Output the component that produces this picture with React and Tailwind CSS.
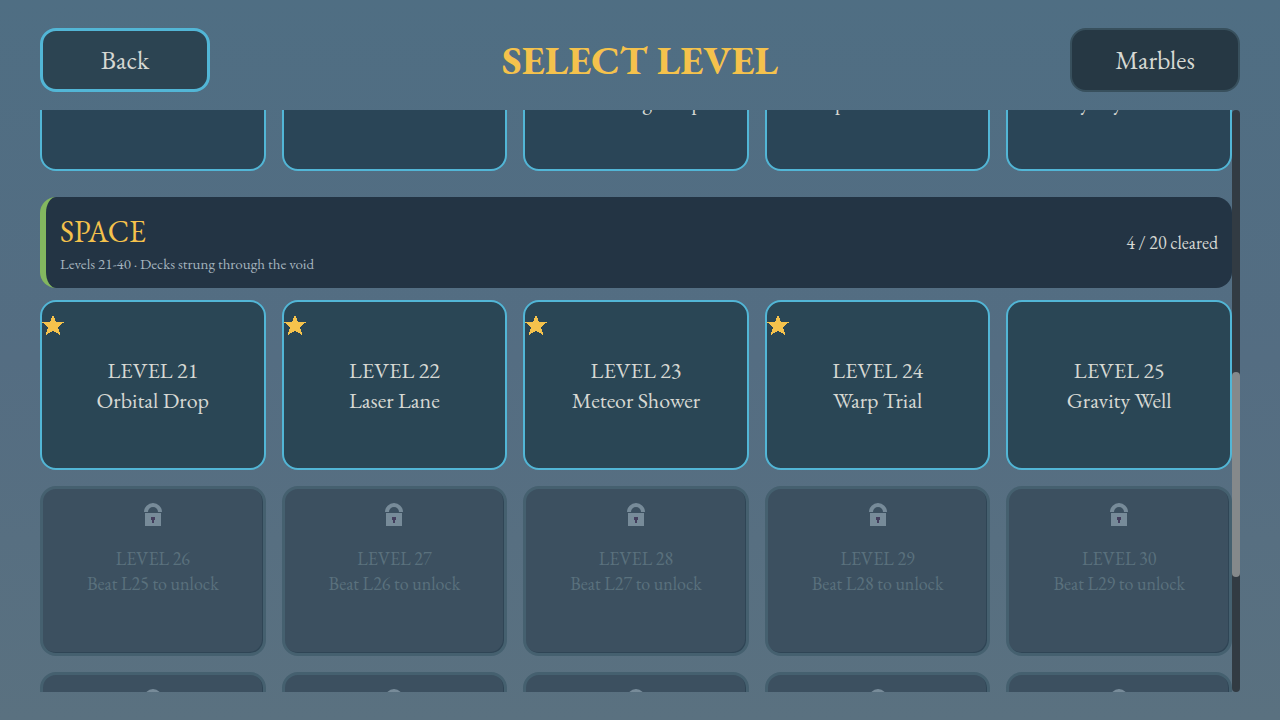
import React from "react";

const clearedRow = [
  { n: 16 },
  { n: 17 },
  { n: 18, name: "Shrinking Loop" },
  { n: 19, name: "Spiral Tower" },
  { n: 20, name: "Skyway Finale" },
];

const openRow = [
  { n: 21, name: "Orbital Drop", star: true },
  { n: 22, name: "Laser Lane", star: true },
  { n: 23, name: "Meteor Shower", star: true },
  { n: 24, name: "Warp Trial", star: true },
  { n: 25, name: "Gravity Well" },
];

const lockedLevels = [26, 27, 28, 29, 30, 31, 32, 33, 34, 35];

const scroll = { start: 45, size: 35.2 };

function Star() {
  return (
    <svg
      viewBox="0 0 22 20"
      shapeRendering="crispEdges"
      className="absolute left-0 top-[13px] h-5 w-[22px]"
      aria-hidden="true"
    >
      <path
        fill="#f5c24c"
        d="M11 -0.6 L13.8 6.6 L22.4 6.8 L16 12 L18.4 20.2 L11 15.8 L3.6 20.2 L6 12 L-0.4 6.8 L8.2 6.6 Z"
      />
    </svg>
  );
}

function Lock() {
  return (
    <svg
      viewBox="0 0 18 24"
      className="absolute left-1/2 top-3.5 h-6 w-[18px] -translate-x-1/2"
      aria-hidden="true"
    >
      <path fill="#778b99" d="M0 9 A9 9 0 0 1 18 9 L14 9 A5 5 0 0 0 4 9 Z" />
      <rect x="1" y="10" width="16" height="13" fill="#778b99" />
      <path fill="#443f5e" d="M7 14 H11 V17 H10 V20 H8 V17 H7 Z" />
    </svg>
  );
}

function LevelCard({ n, name, star, tint = "bg-[#2a4655]" }) {
  return (
    <button
      type="button"
      className={`relative flex h-[170px] flex-col items-center justify-center rounded-2xl border-2 border-[#52b6d6] pt-0.5 text-[22px] leading-[30px] text-[#d6d8d3] ${tint}`}
    >
      {star && <Star />}
      <span>LEVEL {n}</span>
      {name && <span>{name}</span>}
    </button>
  );
}

function LockedCard({ n }) {
  return (
    <button
      type="button"
      disabled
      className="relative flex h-[170px] flex-col items-center justify-center rounded-2xl border-[3px] border-[#45606f] bg-[#3c5060] text-lg leading-[25px] text-[#5a717d] shadow-[inset_-1px_-1px_0_#2f4555]"
    >
      <Lock />
      <span>LEVEL {n}</span>
      <span>Beat L{n - 1} to unlock</span>
    </button>
  );
}

export default function App() {
  return (
    <div className="flex h-screen flex-col gap-[18px] bg-linear-to-b from-[#4f6e83] via-[#546d82] to-[#5a7180] px-10 py-7 font-['EB_Garamond','Liberation_Serif',serif]">
      <header className="flex h-16 shrink-0 items-center justify-between">
        <button
          type="button"
          className="h-16 w-[170px] rounded-2xl border-[3px] border-[#52b6d6] bg-[#2c4452] text-[26px] text-[#d6d8d3]"
        >
          Back
        </button>
        <h1 className="text-[40px] font-bold text-[#f5c24c]">SELECT LEVEL</h1>
        <button
          type="button"
          className="h-16 w-[170px] rounded-2xl border-2 border-[#38505d] bg-[#263844] text-[26px] text-[#d6d8d3]"
        >
          Marbles
        </button>
      </header>

      <div className="flex min-h-0 flex-1">
        <main className="min-w-0 flex-1 overflow-hidden">
          <div className="-mt-[109px] grid grid-cols-5 gap-4">
            {clearedRow.map((level) => (
              <LevelCard key={level.n} {...level} tint="bg-[#2a4557]" />
            ))}
          </div>

          <section className="mb-3 mt-[26px] flex h-[91px] items-center justify-between rounded-2xl border-l-[6px] border-[#83b75f] bg-[#233444] px-3.5">
            <div className="pt-0.5">
              <h2 className="text-[30px] leading-10 text-[#f5c24c]">SPACE</h2>
              <p className="text-[15px] leading-6 text-[#a4b3bd]">
                Levels 21-40 · Decks strung through the void
              </p>
            </div>
            <p className="text-lg text-[#d6d8d3]">4 / 20 cleared</p>
          </section>

          <div className="grid grid-cols-5 gap-4">
            {openRow.map((level) => (
              <LevelCard key={level.n} {...level} />
            ))}
            {lockedLevels.map((n) => (
              <LockedCard key={n} n={n} />
            ))}
          </div>
        </main>

        <div className="relative w-2 shrink-0 rounded-full bg-[#323b43]">
          <div
            className="absolute inset-x-0 rounded-full bg-[#85898b]"
            style={{ top: `${scroll.start}%`, height: `${scroll.size}%` }}
          />
        </div>
      </div>
    </div>
  );
}
